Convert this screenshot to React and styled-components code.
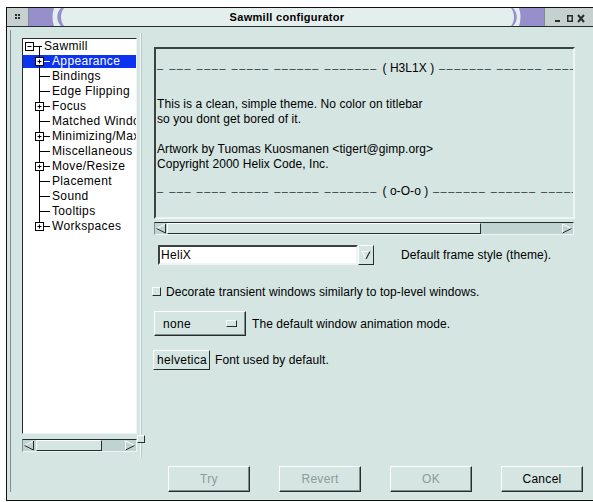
import React from 'react'
import styled, { createGlobalStyle } from 'styled-components'

const c = {
  bg: '#d4e5e2',
  light: '#ffffff',
  trough: '#c1d3d0',
  shadow: '#7d8f8c',
  dark: '#262e2d',
  purple: '#978fcb',
  title: '#e4efed',
  grip: '#c6d1cf',
  select: '#0b33f0',
  disabled: '#8d9b99'
}

const GlobalStyle = createGlobalStyle`
  html, body {
    margin: 0;
    padding: 0;
    background: #fff;
    overflow: hidden;
  }
  body {
    font-family: "Liberation Sans", Arial, sans-serif;
    font-size: 12px;
    color: #000;
  }
`

const Window = styled.div`
  margin: 7px 0 0 6px;
  width: 586px;
  height: 492px;
  border: 1px solid #111;
  background: ${c.bg};
  display: flex;
  flex-direction: column;
`

/* ---------- title bar ---------- */

const TitleBar = styled.div`
  height: 18px;
  display: flex;
  border-bottom: 1px solid ${c.dark};
  flex-shrink: 0;
`

const Grip = styled.div`
  width: 21px;
  background: ${c.grip};
  border-right: 1px solid ${c.shadow};
`

const Cap = styled.svg`
  display: block;
  flex-shrink: 0;
`

const TitleText = styled.div`
  flex: 1;
  background: ${c.title};
  font-family: "Liberation Sans", Arial, sans-serif;
  font-weight: bold;
  font-size: 11px;
  line-height: 18px;
  text-align: center;
  letter-spacing: 0.3px;
`

const Controls = styled.svg`
  display: block;
  width: 48px;
  background: ${c.grip};
  border-left: 1px solid ${c.shadow};
`

/* ---------- body ---------- */

const Content = styled.div`
  flex: 1;
  display: flex;
  flex-direction: column;
  padding: 3px 0 8px 3px;
`

const Inner = styled.div`
  flex: 1;
  display: flex;
  flex-direction: column;
  border-left: 1px solid ${c.shadow};
  padding-left: 11px;
`

const Paned = styled.div`
  height: 427px;
  display: flex;
`

const LeftPane = styled.div`
  width: 115px;
  padding-top: 8px;
  display: flex;
  flex-direction: column;
`

const TreeBox = styled.div`
  height: 394px;
  background: #fff;
  border-top: 1px solid ${c.dark};
  border-left: 1px solid ${c.dark};
  border-right: 1px solid #eef6f5;
  border-bottom: 1px solid #eef6f5;
  overflow: hidden;
`

const Row = styled.div`
  height: 15px;
  display: flex;
  align-items: center;
  white-space: nowrap;
  color: ${p => (p.$selected ? '#fff' : '#000')};
  background: ${p =>
    p.$selected
      ? `linear-gradient(transparent 1px, ${c.select} 1px, ${c.select} 14px, transparent 14px)`
      : 'transparent'};
`

const Gutter = styled.svg`
  display: block;
  flex-shrink: 0;
`

const Label = styled.span`
  line-height: 15px;
  letter-spacing: 0.35px;
`

const Divider = styled.div`
  width: 8px;
  position: relative;
  display: flex;
  justify-content: center;
  padding-top: 3px;
`

const DividerLine = styled.div`
  width: 1px;
  border-left: 1px solid #f2f8f7;
  background: #b7c8c5;
`

const DividerGrip = styled.div`
  position: absolute;
  left: 0;
  top: 405px;
  width: 6px;
  height: 6px;
  background: ${c.bg};
  border: 1px solid;
  border-color: #fff ${c.dark} ${c.dark} #fff;
`

const RightPane = styled.div`
  flex: 1;
  padding: 17px 0 0 8px;
  display: flex;
  flex-direction: column;
`

const Preview = styled.div`
  width: 416px;
  height: 168px;
  margin-left: 1px;
  border-top: 2px solid #3a4341;
  border-left: 2px solid #3a4341;
  border-right: 2px solid #eef6f5;
  border-bottom: 2px solid #eef6f5;
  overflow: hidden;
  white-space: nowrap;
  padding-left: 1px;
`

const PreviewLine = styled.div`
  line-height: 15px;
  margin-top: ${p => p.$gap || 0}px;
  letter-spacing: 0.07px;
`

const Dashes = styled.span`
  font-size: 11px;
  letter-spacing: 1.5px;
  color: #2c2f2f;
`

const Scroll = styled.div`
  height: 11px;
  width: ${p => p.$width}px;
  margin: ${p => p.$margin || '0'};
  display: flex;
  align-items: stretch;
  background: ${c.trough};
  border-top: 1px solid ${c.dark};
  border-left: 1px solid ${c.shadow};
  border-bottom: 1px solid #eef6f5;
  border-right: 1px solid #eef6f5;
`

const Thumb = styled.div`
  width: ${p => p.$width}px;
  margin-left: ${p => p.$offset}px;
  background: ${c.bg};
  border: 1px solid;
  border-color: #fff ${c.dark} ${c.dark} #fff;
  box-sizing: border-box;
`

const Spacer = styled.div`
  flex: 1;
`

const FieldRow = styled.div`
  display: flex;
  align-items: center;
  margin: ${p => p.$margin};
  height: ${p => p.$height}px;
`

const Entry = styled.div`
  width: 195px;
  height: 16px;
  background: #fff;
  border-top: 2px solid #3a4341;
  border-left: 2px solid #3a4341;
  border-right: 2px solid #eef6f5;
  border-bottom: 2px solid #eef6f5;
  padding-left: 1px;
  line-height: 16px;
  letter-spacing: 0.3px;
`

const ComboButton = styled.div`
  width: 14px;
  height: 18px;
  background: ${c.bg};
  border: 1px solid;
  border-color: #fff ${c.dark} ${c.dark} #fff;
  display: flex;
  align-items: center;
  justify-content: center;
`

const Hint = styled.span`
  margin-left: ${p => p.$gap}px;
  letter-spacing: 0.08px;
  white-space: nowrap;
`

const Check = styled.div`
  width: 7px;
  height: 7px;
  margin-left: -1px;
  background: ${c.bg};
  border: 1px solid;
  border-color: #fff ${c.dark} ${c.dark} #fff;
`

const OptionMenu = styled.div`
  width: 82px;
  height: 23px;
  margin-left: 1px;
  padding-left: 8px;
  display: flex;
  align-items: center;
  justify-content: space-between;
  background: ${c.bg};
  border: 1px solid;
  border-color: #fff ${c.dark} ${c.dark} #fff;
  box-shadow: inset -1px -1px 0 ${c.shadow};
  letter-spacing: 0.3px;
`

const Indicator = styled.div`
  width: 9px;
  height: 5px;
  margin-right: 8px;
  background: ${c.bg};
  border: 1px solid;
  border-color: #fff ${c.dark} ${c.dark} #fff;
`

const SmallButton = styled.div`
  height: 18px;
  padding: 0 2px 0 3px;
  display: flex;
  align-items: center;
  background: ${c.bg};
  border: 1px solid;
  border-color: #fff ${c.dark} ${c.dark} #fff;
  letter-spacing: 0.3px;
`

const ButtonRow = styled.div`
  margin-top: 9px;
  height: 26px;
  display: flex;
  justify-content: flex-end;
  gap: 29px;
  padding-right: 10px;
`

const Button = styled.div`
  width: 80px;
  height: 24px;
  display: flex;
  align-items: center;
  justify-content: center;
  background: ${c.bg};
  border: 1px solid;
  border-color: #fff ${c.dark} ${c.dark} #fff;
  box-shadow: inset -1px -1px 0 ${c.shadow};
  color: ${p => (p.$disabled ? c.disabled : '#000')};
  letter-spacing: 0.3px;
`

/* ---------- drawings ---------- */

const LeftArrow = () => (
  <svg width="11" height="11" style={{ display: 'block' }}>
    <path d="M1.5 5.5 L10.5 1" stroke="#fff" fill="none" />
    <path d="M1.5 5.5 L10.5 10 M10.5 1 V10" stroke={c.dark} fill="none" />
  </svg>
)

const RightArrow = () => (
  <svg width="11" height="11" style={{ display: 'block' }}>
    <path d="M0.5 1 L9.5 5.5 M0.5 1 V10" stroke="#fff" fill="none" />
    <path d="M0.5 10 L9.5 5.5" stroke={c.dark} fill="none" />
  </svg>
)

const DownArrow = () => (
  <svg width="10" height="10" style={{ display: 'block' }}>
    <path d="M1 1.5 H9 M1 1.5 L5 9" stroke="#fff" fill="none" />
    <path d="M9 1.5 L5 9" stroke={c.dark} fill="none" strokeWidth="1.2" />
  </svg>
)

const Expander = ({ x, open }) => (
  <g>
    <rect x={x + 0.5} y="3.5" width="8" height="8" fill="#fff" stroke="#000" />
    <path d={`M${x + 2.5} 7.5 H${x + 6.5}`} stroke="#000" />
    {!open && <path d={`M${x + 4.5} 5.5 V9.5`} stroke="#000" />}
  </g>
)

const RootRow = () => (
  <Row>
    <Gutter width="21" height="15">
      <path d="M16.5 7.5 V15 M10 7.5 H19" stroke="#000" fill="none" />
      <Expander x={2} open />
    </Gutter>
    <Label>Sawmill</Label>
  </Row>
)

const ChildRow = ({ label, expand, selected, last }) => {
  const ink = selected ? '#fff' : '#000'
  return (
    <Row $selected={selected}>
      <Gutter width="29" height="15">
        <path d={last ? 'M16.5 0 V7.5' : 'M16.5 0 V15'} stroke="#000" fill="none" />
        <path d={`M${expand ? 20.5 : 16.5} 7.5 H27`} stroke={ink} fill="none" />
        {expand && <Expander x={12} />}
      </Gutter>
      <Label>{label}</Label>
    </Row>
  )
}

const sections = [
  { label: 'Appearance', expand: true, selected: true },
  { label: 'Bindings' },
  { label: 'Edge Flipping' },
  { label: 'Focus', expand: true },
  { label: 'Matched Windows' },
  { label: 'Minimizing/Maximizing', expand: true },
  { label: 'Miscellaneous' },
  { label: 'Move/Resize', expand: true },
  { label: 'Placement' },
  { label: 'Sound' },
  { label: 'Tooltips' },
  { label: 'Workspaces', expand: true }
]

// theme banner rule, drawn with en dashes like the bitmap font's wide hyphens
const lead = '– ––– –––– ––––– –––––– ––––––– '
const tail = ' ––––––– –––––– ––––– –––– ––– –'

export default function App() {
  return (
    <>
      <GlobalStyle />
      <Window>
        <TitleBar>
          <Grip>
            <svg width="21" height="18" style={{ display: 'block' }}>
              <g fill={c.dark}>
                <rect x="8" y="6" width="2" height="2" />
                <rect x="11" y="6" width="2" height="2" />
                <rect x="8" y="9" width="2" height="2" />
                <rect x="11" y="9" width="2" height="2" />
              </g>
            </svg>
          </Grip>
          <Cap width="35" height="18">
            <rect width="35" height="18" fill={c.title} />
            <path d="M0 0 H25 Q22 9 25 18 H0 Z" fill={c.purple} />
            <path d="M32 0 C27 5 27 13 32 18 L35 18 C31 13 31 5 35 0 Z" fill={c.purple} />
          </Cap>
          <TitleText>Sawmill configurator</TitleText>
          <Cap width="34" height="18">
            <rect width="34" height="18" fill={c.title} />
            <path d="M1 0 C5 5 5 13 1 18 L3 18 C8 13 8 5 3 0 Z" fill={c.purple} />
            <path d="M9 0 H34 V18 H9 Q12 9 9 0 Z" fill={c.purple} />
          </Cap>
          <Controls height="18">
            <rect x="10" y="12" width="5" height="2" fill={c.dark} />
            <rect x="22.75" y="7.75" width="4.5" height="5.5" fill="none" stroke={c.dark} strokeWidth="1.5" />
            <path d="M33 7 L39 14 M39 7 L33 14" stroke={c.dark} strokeWidth="2" />
          </Controls>
        </TitleBar>

        <Content>
          <Inner>
            <Paned>
              <LeftPane>
                <TreeBox>
                  <RootRow />
                  {sections.map((s, i) => (
                    <ChildRow key={s.label} {...s} last={i === sections.length - 1} />
                  ))}
                </TreeBox>
                <Scroll $width={113} $margin="5px 0 0 0">
                  <LeftArrow />
                  <Thumb $width={66} $offset={2} />
                  <Spacer />
                  <RightArrow />
                </Scroll>
              </LeftPane>

              <Divider>
                <DividerLine />
                <DividerGrip />
              </Divider>

              <RightPane>
                <Preview>
                  <PreviewLine $gap={12}>
                    <Dashes>{lead}</Dashes>( H3L1X )<Dashes>{tail}</Dashes>
                  </PreviewLine>
                  <PreviewLine $gap={21}>This is a clean, simple theme. No color on titlebar</PreviewLine>
                  <PreviewLine>so you dont get bored of it.</PreviewLine>
                  <PreviewLine $gap={15}>Artwork by Tuomas Kuosmanen &lt;tigert@gimp.org&gt;</PreviewLine>
                  <PreviewLine>Copyright 2000 Helix Code, Inc.</PreviewLine>
                  <PreviewLine $gap={12}>
                    <Dashes>{lead}</Dashes>( o-O-o )<Dashes>{tail}</Dashes>
                  </PreviewLine>
                </Preview>
                <Scroll $width={418} $margin="3px 0 0 1px">
                  <LeftArrow />
                  <Thumb $width={314} $offset={1} />
                  <Spacer />
                  <RightArrow />
                </Scroll>

                <FieldRow $margin="10px 0 0 5px" $height={20}>
                  <Entry>HeliX</Entry>
                  <ComboButton>
                    <DownArrow />
                  </ComboButton>
                  <Hint $gap={27}>Default frame style (theme).</Hint>
                </FieldRow>

                <FieldRow $margin="19px 0 0 0" $height={15}>
                  <Check />
                  <Hint $gap={5}>Decorate transient windows similarly to top-level windows.</Hint>
                </FieldRow>

                <FieldRow $margin="12px 0 0 0" $height={25}>
                  <OptionMenu>
                    none
                    <Indicator />
                  </OptionMenu>
                  <Hint $gap={6}>The default window animation mode.</Hint>
                </FieldRow>

                <FieldRow $margin="14px 0 0 0" $height={20}>
                  <SmallButton>helvetica</SmallButton>
                  <Hint $gap={5}>Font used by default.</Hint>
                </FieldRow>
              </RightPane>
            </Paned>

            <ButtonRow>
              <Button $disabled>Try</Button>
              <Button $disabled>Revert</Button>
              <Button $disabled>OK</Button>
              <Button>Cancel</Button>
            </ButtonRow>
          </Inner>
        </Content>
      </Window>
    </>
  )
}
